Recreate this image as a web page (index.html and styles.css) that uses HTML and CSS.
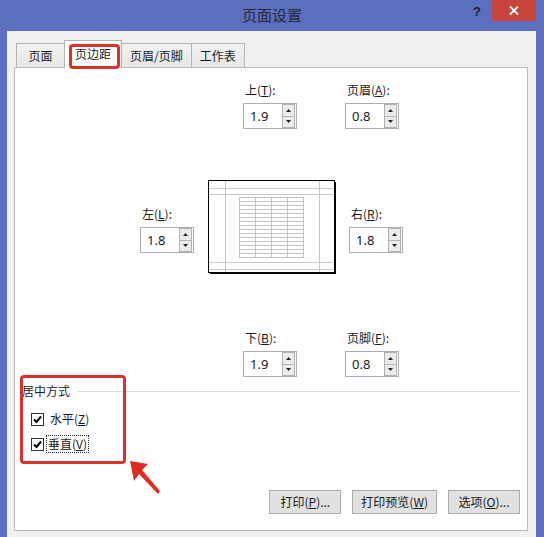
FILE: index.html
```html
<!DOCTYPE html>
<html lang="zh-CN">
<head>
<meta charset="utf-8">
<title>页面设置</title>
<link rel="stylesheet" href="styles.css">
</head>
<body>
<div class="window">
  <div class="titlebar">
    <div class="title">页面设置</div>
    <div class="controls">
      <span class="help">?</span>
      <span class="close"><svg width="10" height="9" viewBox="0 0 10 9"><path d="M1 0.5 L9 8.5 M9 0.5 L1 8.5" stroke="#fff" stroke-width="1.8"/></svg></span>
    </div>
  </div>
  <div class="frame">
    <div class="body">
      <div class="tabs">
        <div class="tab">页面</div>
        <div class="tab active">页边距</div>
        <div class="tab">页眉/页脚</div>
        <div class="tab">工作表</div>
      </div>
      <div class="panel">
        <div class="row row-top">
          <div class="group">
            <div class="label">上(<u>T</u>):</div>
            <div class="spin"><span class="val">1.9</span><span class="arrows"><span class="up"><svg width="5" height="3" viewBox="0 0 5 3"><path d="M2.5 0 L5 3 L0 3Z" fill="#222"/></svg></span><span class="down"><svg width="5" height="3" viewBox="0 0 5 3"><path d="M0 0 L5 0 L2.5 3Z" fill="#222"/></svg></span></span></div>
          </div>
          <div class="group">
            <div class="label">页眉(<u>A</u>):</div>
            <div class="spin"><span class="val">0.8</span><span class="arrows"><span class="up"><svg width="5" height="3" viewBox="0 0 5 3"><path d="M2.5 0 L5 3 L0 3Z" fill="#222"/></svg></span><span class="down"><svg width="5" height="3" viewBox="0 0 5 3"><path d="M0 0 L5 0 L2.5 3Z" fill="#222"/></svg></span></span></div>
          </div>
        </div>
        <div class="row row-mid">
          <div class="group">
            <div class="label">左(<u>L</u>):</div>
            <div class="spin"><span class="val">1.8</span><span class="arrows"><span class="up"><svg width="5" height="3" viewBox="0 0 5 3"><path d="M2.5 0 L5 3 L0 3Z" fill="#222"/></svg></span><span class="down"><svg width="5" height="3" viewBox="0 0 5 3"><path d="M0 0 L5 0 L2.5 3Z" fill="#222"/></svg></span></span></div>
          </div>
          <svg class="preview" width="129" height="95" viewBox="0 0 129 95">
            <rect x="0.5" y="0.5" width="126" height="92" fill="#fff" stroke="#000"/>
            <path d="M127.5 2 V94 M2 93.5 H128" stroke="#000"/>
            <g stroke="#c8c8c8" stroke-width="1">
              <path d="M17.5 1 V92 M111.5 1 V92 M1 8.5 H126 M1 14.5 H126 M1 82.5 H126 M1 89.5 H126"/>
            </g>
            <g stroke="#c2c2c2" stroke-width="1">
              <path d="M31.5 17 V78 M47.5 17 V78 M63.5 17 V78 M79.5 17 V78 M95.5 17 V78"/>
              <path d="M31 17.5 H96 M31 21.5 H96 M31 25.5 H96 M31 29.5 H96 M31 33.5 H96 M31 37.5 H96 M31 41.5 H96 M31 45.5 H96 M31 49.5 H96 M31 53.5 H96 M31 57.5 H96 M31 61.5 H96 M31 65.5 H96 M31 69.5 H96 M31 73.5 H96 M31 77.5 H96"/>
            </g>
          </svg>
          <div class="group">
            <div class="label">右(<u>R</u>):</div>
            <div class="spin"><span class="val">1.8</span><span class="arrows"><span class="up"><svg width="5" height="3" viewBox="0 0 5 3"><path d="M2.5 0 L5 3 L0 3Z" fill="#222"/></svg></span><span class="down"><svg width="5" height="3" viewBox="0 0 5 3"><path d="M0 0 L5 0 L2.5 3Z" fill="#222"/></svg></span></span></div>
          </div>
        </div>
        <div class="row row-bottom">
          <div class="group">
            <div class="label">下(<u>B</u>):</div>
            <div class="spin"><span class="val">1.9</span><span class="arrows"><span class="up"><svg width="5" height="3" viewBox="0 0 5 3"><path d="M2.5 0 L5 3 L0 3Z" fill="#222"/></svg></span><span class="down"><svg width="5" height="3" viewBox="0 0 5 3"><path d="M0 0 L5 0 L2.5 3Z" fill="#222"/></svg></span></span></div>
          </div>
          <div class="group">
            <div class="label">页脚(<u>F</u>):</div>
            <div class="spin"><span class="val">0.8</span><span class="arrows"><span class="up"><svg width="5" height="3" viewBox="0 0 5 3"><path d="M2.5 0 L5 3 L0 3Z" fill="#222"/></svg></span><span class="down"><svg width="5" height="3" viewBox="0 0 5 3"><path d="M0 0 L5 0 L2.5 3Z" fill="#222"/></svg></span></span></div>
          </div>
        </div>
        <div class="section-head"><span>居中方式</span><div class="rule"></div></div>
        <div class="check first"><span class="cb"><svg width="11" height="11" viewBox="0 0 11 11"><path d="M2 5.5 L4.5 8 L9 2.5" fill="none" stroke="#000" stroke-width="2"/></svg></span><span class="ctext">水平(<u>Z</u>)</span></div>
        <div class="check"><span class="cb"><svg width="11" height="11" viewBox="0 0 11 11"><path d="M2 5.5 L4.5 8 L9 2.5" fill="none" stroke="#000" stroke-width="2"/></svg></span><span class="ctext focus">垂直(<u>V</u>)</span></div>
        <div class="buttons">
          <div class="btn">打印(<u>P</u>)...</div>
          <div class="btn">打印预览(<u>W</u>)</div>
          <div class="btn">选项(<u>O</u>)...</div>
        </div>
      </div>
    </div>
  </div>
  <div class="mark mark-tab"></div>
  <div class="mark mark-center"></div>
  <svg class="arrow" width="544" height="537" viewBox="0 0 544 537">
    <polygon points="130,461 148,464 142,470 160,491 158,494 139,474 134,481" fill="#e02b22"/>
  </svg>
</div>
</body>
</html>
```

FILE: styles.css
```css
* { box-sizing: border-box; }
html, body { margin: 0; padding: 0; }
body {
  width: 544px;
  height: 537px;
  overflow: hidden;
  font-family: "Noto Sans CJK SC", "Noto Sans", sans-serif;
  font-size: 12px;
  color: #1a1a1a;
  background: #5b6fbe;
}
.window {
  position: relative;
  width: 544px;
  height: 537px;
  background: #5b6fbe;
  display: flex;
  flex-direction: column;
}
.titlebar {
  height: 31px;
  flex: none;
  display: grid;
  grid-template-columns: 1fr auto 1fr;
  align-items: start;
}
.title {
  grid-column: 2;
  font-size: 15px;
  line-height: 30px;
  color: #262a3a;
}
.controls {
  grid-column: 3;
  justify-self: end;
  display: flex;
  align-items: flex-start;
  padding-right: 8px;
}
.help {
  font: bold 13px "Liberation Sans", sans-serif;
  color: #1e2030;
  margin-top: 4px;
  margin-right: 11px;
}
.close {
  width: 44px;
  height: 21px;
  background: #c8453c;
  display: flex;
  align-items: center;
  justify-content: center;
}
.frame {
  flex: 1;
  display: flex;
  padding: 0 8px 0 7px;
}
.body {
  flex: 1;
  background: #f0f0f0;
  display: flex;
  flex-direction: column;
  padding: 9px 8px 6px 7px;
}
.tabs {
  display: flex;
  align-items: flex-end;
  height: 28px;
  padding-left: 3px;
  margin-bottom: -1px;
  position: relative;
  z-index: 1;
}
.tab {
  height: 24px;
  margin-bottom: 1px;
  line-height: 23px;
  padding: 0 8px;
  min-width: 49px;
  text-align: center;
  border: 1px solid #b4b4b4;
  border-bottom: none;
  background: linear-gradient(#f2f2f2, #e6e6e6);
  margin-left: -1px;
  white-space: nowrap;
}
.tab.active {
  height: 28px;
  margin-bottom: 0;
  line-height: 25px;
  padding: 0 10px;
  background: #fff;
  position: relative;
}
.panel {
  flex: 1;
  background: #fff;
  border: 1px solid #b9b9b9;
  display: flex;
  flex-direction: column;
  padding: 14px 7px 16px 7px;
}
.row { display: flex; align-items: flex-start; }
.row-top { padding-left: 221px; gap: 48px; }
.row-mid { padding-left: 118px; margin-top: 51px; }
.row-mid .group { margin-top: 26px; }
.row-bottom { padding-left: 221px; gap: 48px; margin-top: 55px; }
.preview { display: block; margin: 0 12px 0 14px; flex: none; }
.group { width: 54px; display: flex; flex-direction: column; flex: none; }
.label { height: 16px; line-height: 16px; padding-left: 2px; white-space: nowrap; }
.label u, .ctext u, .btn u { text-underline-offset: 1px; }
.spin {
  margin-top: 5px;
  height: 26px;
  border: 1px solid #abadb3;
  background: #fff;
  display: flex;
  align-items: center;
  padding-left: 6px;
}
.val {
  flex: 1;
  font-family: "Noto Sans", sans-serif;
  font-size: 13px;
  color: #1a1a1a;
}
.arrows {
  display: flex;
  flex-direction: column;
  width: 13px;
  height: 24px;
  margin-right: 1px;
}
.arrows span {
  flex: 1;
  border: 1px solid #b3b3b3;
  background: #ececec;
  display: flex;
  align-items: center;
  justify-content: center;
}
.arrows .down { border-top: none; }
.section-head {
  display: flex;
  align-items: center;
  margin-top: 6px;
  line-height: 16px;
}
.rule { flex: 1; height: 1px; background: #dcdcdc; margin-left: 7px; }
.check {
  display: flex;
  align-items: center;
  height: 20px;
  padding-left: 9px;
  margin-top: 5px;
}
.check.first { margin-top: 10px; }
.cb {
  width: 13px;
  height: 13px;
  border: 1px solid #333;
  background: #fff;
  display: flex;
  align-items: center;
  justify-content: center;
  margin-right: 4px;
}
.ctext { line-height: 16px; padding: 0 1px; border: 1px solid transparent; }
.ctext.focus { border: 1px dotted #222; margin-left: -2px; }
.buttons {
  margin-top: auto;
  display: flex;
  justify-content: flex-end;
  gap: 11px;
}
.btn {
  height: 24px;
  min-width: 72px;
  padding: 0 8px;
  line-height: 22px;
  text-align: center;
  border: 1px solid #adadad;
  background: #e1e1e1;
  white-space: nowrap;
}
.mark {
  position: absolute;
  z-index: 5;
  border: 3px solid #dc3129;
  border-radius: 4px;
}
.mark-tab { left: 69px; top: 44px; width: 51px; height: 25px; }
.mark-center { left: 20px; top: 375px; width: 106px; height: 89px; }
.arrow { position: absolute; z-index: 5; left: 0; top: 0; pointer-events: none; }
```
